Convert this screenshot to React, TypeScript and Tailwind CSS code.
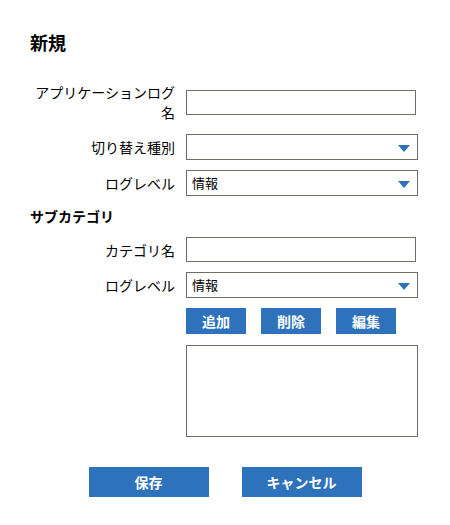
const font = { fontFamily: '"Noto Sans CJK JP", "Noto Sans", sans-serif' };

function Field({ label, children }: { label: string; children: React.ReactNode }) {
  return (
    <div className="flex items-center">
      <div className="w-[145px] text-right text-[14px] leading-[20px] text-black">{label}</div>
      <div className="ml-[11px]">{children}</div>
    </div>
  );
}

function TextBox() {
  return <input type="text" className="block w-[230px] h-[25px] border border-[#6e6e64] bg-white outline-none" />;
}

function Select({ value }: { value?: string }) {
  return (
    <div className="relative w-[232px] h-[26px] border border-[#6e6e64] bg-white">
      <div className="pl-[5px] text-[13px] leading-[24px] text-black">{value}</div>
      <svg className="absolute right-[7px] top-[10px]" width="12" height="7" viewBox="0 0 12 7">
        <polygon points="0,0 12,0 6,7" fill="#2e72bc" />
      </svg>
    </div>
  );
}

function Btn({ children, wide }: { children: React.ReactNode; wide?: boolean }) {
  return (
    <button
      className={`bg-[#2e72bc] text-white font-bold text-[14px] ${wide ? "w-[120px] h-[30px]" : "w-[60px] h-[26px]"}`}
    >
      {children}
    </button>
  );
}

export default function App() {
  return (
    <div className="w-[450px] h-[525px] bg-white pl-[30px] pt-[28px]" style={font}>
      <h1 className="text-[18px] font-bold leading-[28px] text-black">新規</h1>

      <div className="mt-[26px]">
        <Field label="アプリケーションログ名">
          <TextBox />
        </Field>
      </div>
      <div className="mt-[12px]">
        <Field label="切り替え種別">
          <Select />
        </Field>
      </div>
      <div className="mt-[10px]">
        <Field label="ログレベル">
          <Select value="情報" />
        </Field>
      </div>

      <h2 className="mt-[10px] text-[14px] font-bold leading-[20px] text-black">サブカテゴリ</h2>

      <div className="mt-[11px]">
        <Field label="カテゴリ名">
          <TextBox />
        </Field>
      </div>
      <div className="mt-[10px]">
        <Field label="ログレベル">
          <Select value="情報" />
        </Field>
      </div>

      <div className="ml-[156px] mt-[10px] flex gap-[15px]">
        <Btn>追加</Btn>
        <Btn>削除</Btn>
        <Btn>編集</Btn>
      </div>

      <textarea className="ml-[156px] mt-[11px] block w-[232px] h-[92px] border border-[#6e6e64] resize-none outline-none" />

      <div className="mt-[30px] -ml-[30px] flex justify-center gap-[33px]">
        <Btn wide>保存</Btn>
        <Btn wide>キャンセル</Btn>
      </div>
    </div>
  );
}
